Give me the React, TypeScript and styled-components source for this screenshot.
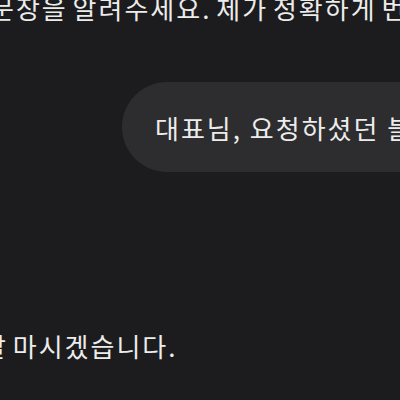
import React from "react";
import styled, { createGlobalStyle } from "styled-components";

const GlobalStyle = createGlobalStyle`
  html, body {
    margin: 0;
    padding: 0;
    background: #1c1c1e;
    overflow: hidden;
  }
`;

type LineProps = { $shift: number; $top: number };

const Screen = styled.div`
  width: 400px;
  height: 400px;
  overflow: hidden;
  display: flex;
  flex-direction: column;
  background: #1c1c1e;
  font-family: "Noto Sans CJK KR", "Noto Sans", sans-serif;
  color: #ececec;
  font-size: 26px;
  letter-spacing: 2px;
`;

const AssistantLine = styled.div<LineProps>`
  margin-top: ${({ $top }) => $top}px;
  margin-left: ${({ $shift }) => $shift}px;
  line-height: 40px;
  white-space: nowrap;
  word-spacing: -3px;
`;

const UserRow = styled.div<{ $top: number }>`
  margin-top: ${({ $top }) => $top}px;
  padding-left: 122px;
  display: flex;
`;

const Bubble = styled.div`
  flex-shrink: 0;
  height: 90px;
  padding: 0 40px 0 33px;
  display: flex;
  align-items: center;
  background: #2d2d2f;
  border-radius: 45px;
  white-space: nowrap;
`;

export default function App() {
  return (
    <>
      <GlobalStyle />
      <Screen>
        <AssistantLine $top={-12} $shift={-10}>
          문장을 알려주세요. 제가 정확하게 번역해 드릴게요.
        </AssistantLine>
        <UserRow $top={54}>
          <Bubble>대표님, 요청하셨던 블로그 글입니다.</Bubble>
        </UserRow>
        <AssistantLine $top={154} $shift={-18}>
          잘 마시겠습니다.
        </AssistantLine>
      </Screen>
    </>
  );
}
